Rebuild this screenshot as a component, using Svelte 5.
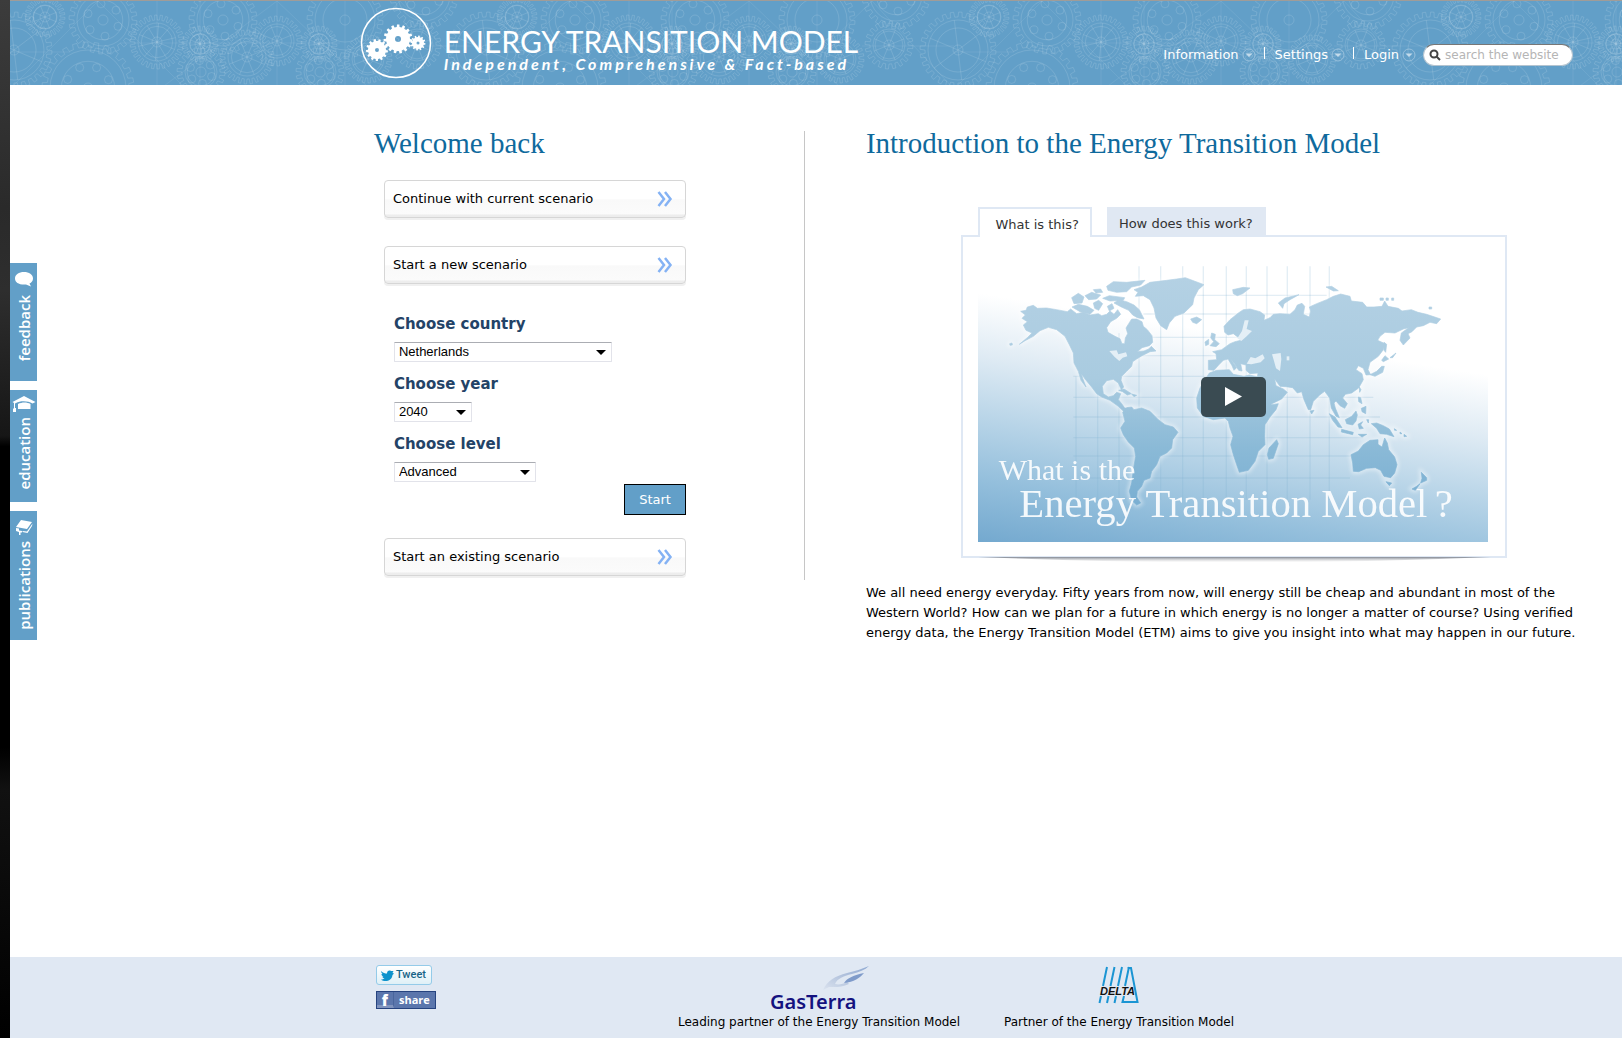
<script>
  const TAU = Math.PI * 2;

  // Outline of a cog: square teeth of the given depth round a rim.
  function cog(cx, cy, r, teeth, depth) {
    const step = TAU / teeth;
    const at = (radius, angle) =>
      `${(cx + radius * Math.cos(angle)).toFixed(2)} ${(cy + radius * Math.sin(angle)).toFixed(2)}`;
    let d = '';
    for (let i = 0; i < teeth; i++) {
      const a = i * step;
      d += `${i ? 'L' : 'M'}${at(r - depth, a)}L${at(r, a + step * 0.08)}`;
      d += `L${at(r, a + step * 0.48)}L${at(r - depth, a + step * 0.56)}`;
    }
    return d + 'Z';
  }

  function around(cx, cy, distance, count) {
    return Array.from({ length: count }, (_, i) => ({
      x: cx + distance * Math.cos((i * TAU) / count + 0.4),
      y: cy + distance * Math.sin((i * TAU) / count + 0.4),
    }));
  }

  const cogs = [
    { x: 93, y: 19, r: 34, teeth: 24, holes: 6, spokes: 0 },
    { x: 213, y: 19, r: 34, teeth: 24, holes: 6, spokes: 0 },
    { x: 147, y: 41, r: 27, teeth: 30, holes: 0, spokes: 10 },
    { x: 78, y: 87, r: 46, teeth: 26, holes: 8, spokes: 0 },
    { x: 4, y: 49, r: 38, teeth: 28, holes: 0, spokes: 6 },
    { x: 476, y: 49, r: 38, teeth: 28, holes: 0, spokes: 6 },
    { x: 35, y: 16, r: 20, teeth: 26, holes: 0, spokes: 8 },
    { x: 237, y: 56, r: 27, teeth: 28, holes: 0, spokes: 8 },
    { x: 191, y: 71, r: 24, teeth: 20, holes: 6, spokes: 0 },
    { x: 190, y: 43, r: 18, teeth: 22, holes: 0, spokes: 12 },
    { x: 267, y: 40, r: 25, teeth: 26, holes: 0, spokes: 8 },
    { x: 335, y: 19, r: 38, teeth: 26, holes: 0, spokes: 0 },
    { x: 309, y: 43, r: 18, teeth: 22, holes: 0, spokes: 12 },
    { x: 310, y: 71, r: 24, teeth: 20, holes: 6, spokes: 0 },
    { x: 358, y: 58, r: 24, teeth: 26, holes: 0, spokes: 8 },
    { x: 414, y: -6, r: 34, teeth: 24, holes: 6, spokes: 0 },
    { x: 407, y: 44, r: 24, teeth: 20, holes: 0, spokes: 8 },
  ];

  const menu = ['Information', 'Settings', 'Login'];
  const countries = ['Netherlands', 'Germany', 'United Kingdom'];
  const years = ['2020', '2030', '2040', '2050'];
  const levels = ['Simple', 'Medium', 'Advanced'];

  let country = $state('Netherlands');
  let year = $state('2040');
  let level = $state('Advanced');
  let query = $state('');

  const meridians = [378, 443, 507, 567, 632, 698, 760, 829, 889, 951, 1012, 1080, 1138];
  const parallels = [
    [317, 740, 1130], [373, 580, 1150], [443, 580, 1150], [498, 560, 1150], [560, 370, 1200],
    [623, 370, 1270], [682, 370, 1290], [744, 370, 1240], [799, 370, 1220], [865, 400, 1200],
  ];

  const land = [
    // North and Central America
    'M212 365L228 362 232 352 250 347 262 356 290 355 320 360 352 366 362 358 380 372 400 368 420 376 445 372 455 378 470 374 480 364 492 374 503 360 512 374 500 386 482 396 470 414 474 428 495 440 510 447 516 462 524 462 526 445 533 432 528 415 536 402 545 388 560 388 576 396 580 410 592 420 606 438 608 458 598 468 576 474 562 486 582 484 596 478 604 470 618 484 600 486 576 498 560 508 548 516 545 530 530 545 515 560 513 572 521 592 514 600 505 580 490 569 470 573 457 590 460 612 475 622 490 618 500 608 512 612 505 630 515 642 524 655 545 656 524 668 505 650 480 632 455 622 440 612 425 592 405 568 394 552 398 566 408 592 393 572 385 545 372 520 370 490 358 465 345 440 320 420 295 413 270 423 250 440 225 453 208 464 232 444 246 430 228 422 220 406 232 396 216 386 226 376Z',
    // Aleutian islands
    'M179 462L186 460 187 466 180 467Z',
    // Arctic islands
    'M365 324L385 311 402 322 396 340 372 342ZM366 352L385 344 412 350 432 362 420 374 390 366ZM405 318L425 308 452 316 440 328 416 330ZM430 300L452 298 458 308 438 310ZM430 340L446 332 458 342 446 362 434 356ZM458 326L478 318 524 324 520 332 480 334ZM470 290L490 276 530 278 585 272 572 286 545 292 530 306 500 308 474 302ZM492 340L506 330 530 336 552 346 568 360 582 388 562 384 548 376 536 362 514 352ZM472 350L486 342 492 356 478 364Z',
    // Greenland and Iceland
    'M552 300L575 292 600 278 650 272 680 268 706 264 735 275 762 285 745 300 732 325 728 345 702 370 675 380 658 400 650 420 632 408 618 385 612 355 600 330 580 318 556 320 564 308ZM722 388L740 382 755 390 740 402 728 398Z',
    // Caribbean
    'M506 602L522 598 544 612 532 616 518 606ZM545 613L560 617 552 621Z',
    // South America
    'M518 668L530 654 545 652 552 660 575 655 600 665 625 690 645 705 670 712 684 728 668 750 665 775 650 790 630 800 620 825 605 845 600 865 582 872 575 890 562 905 560 922 572 940 560 946 545 932 538 905 545 880 550 840 557 800 553 775 535 757 520 735 512 715 525 695Z',
    // Britain and Ireland
    'M785 430L796 434 794 450 808 462 798 471 780 468 791 456 782 444ZM765 457L776 449 776 464 767 468Z',
    // Africa and Madagascar
    'M778 550L800 542 838 540 850 554 882 560 898 556 925 562 930 582 942 605 952 628 965 645 985 642 978 660 960 682 945 705 944 740 945 765 925 785 915 815 895 842 868 848 860 825 850 795 842 765 849 740 840 715 835 695 825 685 790 690 760 680 742 655 740 625 750 595 765 570ZM980 750L985 762 970 806 956 809 952 795 957 775Z',
    // Europe and Asia
    'M775 512L800 510 798 492 788 486 815 480 840 462 855 456 872 452 878 442 866 444 850 432 834 436 824 428 822 410 840 390 865 370 880 360 900 358 930 366 944 376 942 392 960 384 970 374 990 372 1020 374 1035 360 1042 346 1056 341 1064 350 1060 374 1078 382 1082 364 1078 352 1100 342 1130 330 1150 320 1172 313 1200 320 1204 334 1238 338 1250 352 1272 352 1296 350 1304 334 1314 350 1345 356 1356 364 1384 360 1404 368 1430 374 1472 388 1460 402 1440 398 1420 408 1400 412 1386 426 1374 432 1380 445 1360 466 1350 452 1354 430 1376 414 1360 418 1335 430 1305 428 1290 440 1283 452 1305 462 1300 480 1285 500 1260 518 1254 540 1262 555 1248 556 1240 536 1225 528 1218 540 1236 552 1240 570 1226 595 1205 610 1186 614 1178 625 1192 642 1184 656 1170 648 1158 634 1152 640 1156 655 1168 684 1158 680 1144 655 1139 625 1124 605 1110 615 1090 635 1082 660 1075 660 1062 630 1055 606 1042 610 1028 594 1008 591 990 590 974 568 978 588 1000 598 1012 608 995 628 958 646 946 620 930 590 922 562 924 550 900 552 888 542 888 526 872 522 876 544 866 542 852 520 842 508 860 534 852 542 846 528 834 508 820 512 806 526 792 542 775 540Z',
    // Islands off Asia
    'M985 340L1005 325 1047 315 1020 330 1002 342 998 356ZM848 300L880 293 900 295 878 312 862 318 850 312ZM1128 292L1145 290 1165 303 1150 304ZM1260 555L1280 545 1295 530 1303 530 1298 548 1275 560ZM1295 512L1305 498 1316 508 1300 516ZM1302 458L1310 464 1307 488 1302 482ZM1320 504L1338 490 1328 504ZM1228 592L1233 600 1229 608ZM1225 622L1232 624 1236 642 1226 636ZM1234 656L1248 650 1247 672 1236 666ZM1080 664L1092 662 1085 673ZM1290 325h10v7h-10ZM1308 325h7v7h-7ZM1325 325h6v7h-6ZM1437 352h8v6h-8Z',
    // Indonesia and New Guinea
    'M1138 672L1155 682 1176 714 1164 712 1148 692ZM1175 719L1210 728 1208 735 1174 727ZM1186 690L1205 680 1218 664 1222 676 1218 694 1208 706 1190 702ZM1224 704L1238 696 1232 706 1240 716 1228 718ZM1225 734L1250 734 1236 742ZM1250 690L1256 690 1255 700ZM1264 702L1280 700 1300 708 1318 718 1332 741 1310 734 1290 732 1280 716ZM1333 717L1340 722 1334 722ZM1350 727L1356 732 1350 732ZM1362 734L1370 740 1362 741Z',
    // Australia and New Zealand
    'M1203 795L1225 784 1240 765 1260 752 1284 750 1284 764 1296 772 1304 745 1312 760 1316 780 1334 802 1341 825 1334 850 1322 864 1302 860 1292 842 1276 834 1250 836 1226 846 1210 845 1208 820ZM1308 876L1325 880 1318 888ZM1414 848L1430 864 1430 872 1412 880 1416 866ZM1410 882L1396 902 1386 898 1400 890Z',
  ];

  // Inland waters, drawn over the land
  const water = [
    'M478 484L500 482 505 494 528 488 532 500 518 504 508 514 494 502Z',
    'M890 522L902 502 916 506 938 494 944 506 932 518 904 524Z',
    'M966 494L992 490 994 508 990 544 978 536 972 514Z',
    'M862 446L876 424 884 392 896 392 890 418 906 424 890 440 874 454Z',
    'M1010 500h8v12h-8Z',
  ];
</script>

{#snippet chevrons()}
  <svg class="chevrons" viewBox="0 0 16 16" aria-hidden="true">
    <path d="M1.5 1L7 8L1.5 15M8 1L13.500 8L8 15" />
  </svg>
{/snippet}

{#snippet dropdown(id, label, options, size, get, set)}
  <label for={id}>{label}</label>
  <span class="select {size}">
    <select {id} bind:value={get, set}>
      {#each options as option}
        <option>{option}</option>
      {/each}
    </select>
    <svg viewBox="0 0 10 5" aria-hidden="true"><path d="M0 0H10L5 5Z" /></svg>
  </span>
{/snippet}

<div class="window">
  <div class="backdrop"></div>
  <div class="page">
    <header>
      <svg class="texture" aria-hidden="true">
        <defs>
          <pattern id="cogs" width="472" height="90" patternUnits="userSpaceOnUse">
            <path class="guide" d="M0 88L88 0L176 88M147 0V88M110 42H330M150 88L267 0L360 88M190 0V88M267 0V88M300 88L390 0L472 88M0 51H60M335 0V88M380 45H472" />
            {#each cogs as c}
              <path d={cog(c.x, c.y, c.r, c.teeth, 5)} />
              <circle cx={c.x} cy={c.y} r={c.r - 8} />
              <circle cx={c.x} cy={c.y} r={c.r * 0.58} />
              <circle cx={c.x} cy={c.y} r="5" />
              {#each around(c.x, c.y, c.r * 0.48, c.holes) as h}
                <circle cx={h.x} cy={h.y} r="4" />
              {/each}
              {#each around(c.x, c.y, c.r - 8, c.spokes) as s}
                <line x1={c.x} y1={c.y} x2={s.x} y2={s.y} />
              {/each}
            {/each}
          </pattern>
        </defs>
        <rect width="100%" height="100%" fill="url(#cogs)" />
      </svg>
      <div class="bar">
        <a class="brand" href="/">
          <svg class="emblem" viewBox="0 0 72 72" aria-hidden="true">
            <circle cx="36" cy="36" r="34.500" />
            <path d={cog(38, 32, 14.5, 15, 2.5) + 'M41 32a3 3 0 1 0-6 0a3 3 0 1 0 6 0Z'} />
            <path d={cog(17, 43, 11, 13, 2) + 'M19 43a2 2 0 1 0-4 0a2 2 0 1 0 4 0Z'} />
            <path d={cog(58, 36, 7.5, 12, 1.5) + 'M59.500 36a1.500 1.500 0 1 0-3 0a1.500 1.500 0 1 0 3 0Z'} />
          </svg>
          <span class="wordmark">
            <span class="name">ENERGY TRANSITION MODEL</span>
            <span class="tagline">Independent, Comprehensive &amp; Fact-based</span>
          </span>
        </a>
        <nav>
          {#each menu as item}
            <button type="button">
              {item}
              <svg viewBox="0 0 14 14" aria-hidden="true">
                <circle cx="7" cy="7" r="6" /><path d="M3.500 5.500H10.500L7 9Z" />
              </svg>
            </button>
          {/each}
        </nav>
        <form class="search" role="search">
          <svg viewBox="0 0 12 12" aria-hidden="true"><circle cx="5" cy="5" r="3.500" /><path d="M7.500 7.500L11 11" /></svg>
          <input type="text" aria-label="Search" placeholder="search the website" bind:value={query} />
        </form>
      </div>
    </header>

    <div class="body">
      <aside>
        <a class="feedback" href="#feedback">
          <svg viewBox="0 0 20 16" aria-hidden="true"><path d="M10 1C15 1 19 3.500 19 7.500C19 10 17.500 11.500 15.500 12.500L17 15.500L12 13.500C5 14 1 11.500 1 7.500C1 3.500 5 1 10 1Z" /></svg>
          <span>feedback</span>
        </a>
        <a class="education" href="#education">
          <svg viewBox="0 0 24 18" aria-hidden="true"><path d="M12 1L23.500 7L20.500 8.500C16 5.500 8 5.500 4 8L3 8.500V13H4V17H1V14L2 13V8L0.500 7ZM6 9C10 7 15 7 18.500 9V14H6Z" /></svg>
          <span>education</span>
        </a>
        <a class="publications" href="#publications">
          <svg viewBox="0 0 18 16" aria-hidden="true"><path d="M6 1L17 3L12 10L1 8ZM17.500 4.500L17 7L12.500 14L7.500 13L7.500 12L12 12.500ZM1 9L4 9.500V11.500L7 12V13.500H5.500V16H4V13L1 12Z" /></svg>
          <span>publications</span>
        </a>
      </aside>

      <main>
        <section class="start">
          <h1>Welcome back</h1>
          <div class="choices">
            <button type="button" class="wide">Continue with current scenario {@render chevrons()}</button>
            <button type="button" class="wide">Start a new scenario {@render chevrons()}</button>
            <form class="scenario">
              {@render dropdown('country', 'Choose country', countries, 'long', () => country, (v) => (country = v))}
              {@render dropdown('year', 'Choose year', years, 'short', () => year, (v) => (year = v))}
              {@render dropdown('level', 'Choose level', levels, 'medium', () => level, (v) => (level = v))}
              <button type="button" class="go">Start</button>
            </form>
            <button type="button" class="wide">Start an existing scenario {@render chevrons()}</button>
          </div>
        </section>

        <section class="intro">
          <h2>Introduction to the Energy Transition Model</h2>
          <div class="player">
            <div class="tabs" role="tablist">
              <button type="button" role="tab" aria-selected="true">What is this?</button>
              <button type="button" role="tab" aria-selected="false">How does this work?</button>
            </div>
            <div class="panel" role="tabpanel">
              <div class="video">
                <svg class="poster" viewBox="84 196 1530 861" role="img" aria-label="World map">
                  <defs>
                    <linearGradient id="sky" gradientUnits="userSpaceOnUse" x1="84" y1="310" x2="-33" y2="1037">
                      <stop offset="0" stop-color="#fff" />
                      <stop offset="0.250" stop-color="#dfebf4" />
                      <stop offset="0.500" stop-color="#b9d5e8" />
                      <stop offset="0.750" stop-color="#94bfdc" />
                      <stop offset="1" stop-color="#74a9cf" />
                    </linearGradient>
                    <linearGradient id="ground" gradientUnits="userSpaceOnUse" x1="0" y1="260" x2="0" y2="940">
                      <stop offset="0" stop-color="#b4d1e4" />
                      <stop offset="0.450" stop-color="#a9cbe0" />
                      <stop offset="0.750" stop-color="#8bbad7" />
                      <stop offset="1" stop-color="#7aafd2" />
                    </linearGradient>
                    <filter id="glow"><feGaussianBlur stdDeviation="7" /></filter>
                    <filter id="soft"><feGaussianBlur stdDeviation="1" /></filter>
                  </defs>
                  <rect x="84" y="196" width="1530" height="861" fill="url(#sky)" />
                  <g class="grid">
                    {#each meridians as x}<path d="M{x} {x < 560 ? 560 - (x - 378) : 230}V930" />{/each}
                    {#each parallels as [y, from, to]}<path d="M{from} {y}H{to}" />{/each}
                  </g>
                  <g class="halo" filter="url(#glow)">
                    {#each land as d}<path {d} />{/each}
                  </g>
                  <g filter="url(#soft)">
                    {#each land as d}<path {d} class="land" />{/each}
                    {#each water as d}<path {d} class="water" />{/each}
                  </g>
                  <text x="146" y="872" font-size="90">What is the</text>
                  <text x="208" y="983" font-size="122">Energy Transition Model</text>
                  <text x="1454" y="983" font-size="122">?</text>
                </svg>
                <button type="button" class="play" aria-label="Play">
                  <svg viewBox="0 0 17 19" aria-hidden="true"><path d="M0 0L17 9.500L0 19Z" /></svg>
                </button>
              </div>
            </div>
            <svg class="shade" viewBox="0 0 512 6" preserveAspectRatio="none" aria-hidden="true">
              <defs>
                <linearGradient id="fade" x1="0" y1="0" x2="0" y2="1">
                  <stop offset="0" stop-color="#858a94" />
                  <stop offset="1" stop-color="#ddd" stop-opacity="0" />
                </linearGradient>
              </defs>
              <path d="M0 0H512Q256 11 0 0Z" fill="url(#fade)" />
            </svg>
          </div>
          <p>We all need energy everyday. Fifty years from now, will energy still be cheap and abundant in most of the Western World? How can we plan for a future in which energy is no longer a matter of course? Using verified energy data, the Energy Transition Model (ETM) aims to give you insight into what may happen in our future.</p>
        </section>
      </main>
    </div>

    <footer>
      <div class="social">
        <a class="tweet" href="#tweet">
          <svg viewBox="0 0 13 11" aria-hidden="true"><path d="M0 1C2 3 4 3.500 6 3.500C6 1 8 0 10 1L12.500 1L11.500 3L13 3.500L11.500 5C11 9 8 11 4.500 11C3 11 1 10.500 0 9.500C1.500 9.500 2.500 9 3.500 8.500C2 8 1.500 7.500 1.500 6.500H2.500C1 6 0.500 5 0.500 4H1.500C0.500 3 0 2 0 1Z" /></svg>
          Tweet
        </a>
        <a class="share" href="#share"><b>f</b><span>share</span></a>
      </div>
      <a class="partner" href="#gasterra">
        <svg class="gasterra" viewBox="0 0 104 47" role="img" aria-label="GasTerra">
          <defs>
            <linearGradient id="plume" x1="0" y1="1" x2="1" y2="0">
              <stop offset="0" stop-color="#dbe3ef" />
              <stop offset="0.500" stop-color="#b3c3dd" />
              <stop offset="1" stop-color="#8fa9d2" />
            </linearGradient>
          </defs>
          <path fill="url(#plume)" d="M56 25C60 16 68 11 80 8C88 6 95 4 102 1C98 5 92 7 85 9C76 11 70 14 68 19C72 20 76 19 80 17L82 19C74 23 66 22 62 22Z" />
          <path fill="#7f9bca" d="M77 18C80 13 87 10 97 8C93 13 87 17 77 18Z" />
          <text x="3" y="44">GasTerra</text>
        </svg>
        Leading partner of the Energy Transition Model
      </a>
      <a class="partner" href="#delta">
        <svg class="delta" viewBox="0 9 42 47" role="img" aria-label="Delta">
          <path d="M9 11L5 30M16.500 11L12.500 30M24 11L20 30M31 11L27 30M3 40L1.500 47M10.500 40L9 47M18 40L16.500 47M29.500 12H33L39.500 46H24.500L26 40" />
          <text x="2" y="39">DELTA</text>
        </svg>
        Partner of the Energy Transition Model
      </a>
    </footer>
  </div>
</div>

<style>
  :global(body) {
    margin: 0;
    background: #fff;
    color: #000;
    font: 13px/20px Verdana, 'DejaVu Sans', sans-serif;
  }

  * {
    box-sizing: border-box;
  }

  a {
    color: inherit;
    text-decoration: none;
  }

  button {
    font: inherit;
    color: inherit;
    cursor: pointer;
  }

  .window {
    display: flex;
    min-height: 100vh;
  }

  .backdrop {
    flex: 0 0 10px;
    background: linear-gradient(#3c3c3c, #2a2a2a 20%, #2e2e2e 28%, #161616 42%, #000 43%, #000 72%, #111 76%, #000);
  }

  .page {
    flex: 1;
    min-width: 0;
    display: flex;
    flex-direction: column;
  }

  header {
    display: grid;
    border-top: 1px solid #a09c98;
    background: #629fc8;
  }

  .texture,
  .bar {
    grid-area: 1 / 1;
  }

  .texture {
    width: 100%;
    height: 0;
    min-height: 100%;
  }

  .texture path,
  .texture circle,
  .texture line {
    fill: none;
    stroke: #fff;
    stroke-opacity: 0.12;
  }

  .texture .guide {
    stroke-opacity: 0.07;
  }

  .bar {
    z-index: 1;
    display: flex;
    align-items: center;
    height: 84px;
    padding: 0 49px 0 21.7%;
    color: #fff;
  }

  .brand {
    display: flex;
    align-items: center;
    gap: 12px;
    margin-right: auto;
    white-space: nowrap;
  }

  .emblem {
    width: 72px;
    height: 72px;
  }

  .emblem circle {
    fill: none;
    stroke: #fff;
    stroke-width: 1.5;
  }

  .emblem path {
    fill: #fff;
    fill-rule: evenodd;
  }

  .wordmark {
    display: flex;
    flex-direction: column;
    padding-top: 11px;
    font-family: Lato, sans-serif;
  }

  .name {
    font-size: 30px;
    line-height: 30px;
  }

  .tagline {
    font-size: 16px;
    line-height: 16px;
    font-style: italic;
    font-weight: 700;
    letter-spacing: 3px;
  }

  nav {
    display: flex;
    padding-top: 23px;
  }

  nav button {
    display: flex;
    align-items: center;
    gap: 3px;
    padding: 0;
    border: 0;
    background: none;
  }

  nav button + button::before {
    content: '';
    width: 1px;
    height: 12px;
    margin: 0 7px 3px 8px;
    background: #fff;
  }

  nav svg {
    width: 14px;
    height: 14px;
  }

  nav circle {
    fill: none;
    stroke: #98c0dc;
  }

  nav path {
    fill: #c3dbeb;
  }

  .search {
    display: flex;
    align-items: center;
    gap: 4px;
    width: 150px;
    height: 22px;
    margin: 23px 0 0 7px;
    padding-left: 5px;
    border: 1px solid #b4c4d0;
    border-top-color: #777;
    border-radius: 11px;
    background: #fff;
  }

  .search svg {
    flex: none;
    width: 12px;
    height: 12px;
    fill: none;
    stroke: #444;
    stroke-width: 2;
  }

  .search input {
    min-width: 0;
    flex: 1;
    padding: 0;
    border: 0;
    outline: 0;
    background: none;
    font: 12px/18px Verdana, 'DejaVu Sans', sans-serif;
  }

  .search input::placeholder {
    color: #b5b5b5;
  }

  .body {
    flex: 1;
    display: flex;
  }

  aside {
    flex: 0 0 27px;
    display: flex;
    flex-direction: column;
    gap: 9px;
    padding-top: 178px;
  }

  aside a {
    display: flex;
    flex-direction: column;
    align-items: center;
    gap: 8px;
    padding-top: 8px;
    background: #629fc8;
    color: #fff;
    font: 600 15px/20px 'Open Sans', sans-serif;
  }

  aside a span {
    writing-mode: vertical-rl;
    transform: rotate(180deg);
  }

  aside svg {
    width: 20px;
    height: 16px;
    fill: #fff;
  }

  .feedback {
    height: 118px;
  }

  .education {
    height: 112px;
    gap: 4px;
    padding-top: 5px;
  }

  .education svg {
    width: 24px;
    height: 18px;
  }

  .publications {
    height: 129px;
    gap: 6px;
  }

  main {
    flex: 1;
    min-width: 0;
    display: flex;
    align-items: flex-start;
    padding: 46px 19px 40px 20.9%;
  }

  h1,
  h2 {
    margin: 0;
    color: #0f6a9d;
    font: 400 29px/24px Georgia, 'Liberation Serif', serif;
  }

  .start {
    flex: 0 0 431px;
    padding-bottom: 4px;
    border-right: 1px solid #c6c6c6;
  }

  .choices {
    display: flex;
    flex-direction: column;
    gap: 28px;
    width: 302px;
    margin: 25px 0 0 10px;
  }

  .wide {
    display: flex;
    align-items: center;
    justify-content: space-between;
    height: 38px;
    padding: 0 12px 1px 8px;
    border: 1px solid #d6d6d6;
    border-radius: 4px;
    background: linear-gradient(#fff 50%, #f9f9f9 52%, #fbfbfb 92%, #ededed 94%);
    box-shadow: 0 2px 0 #f0f0f0;
  }

  .chevrons {
    width: 16px;
    height: 16px;
    fill: none;
    stroke: #84b2f4;
    stroke-width: 2.5;
  }

  .scenario {
    display: flex;
    flex-direction: column;
    align-items: flex-start;
    margin: 2px 0 -5px;
    padding-left: 10px;
  }

  .scenario label {
    margin-bottom: 8px;
    color: #234367;
    font-size: 15px;
    font-weight: 700;
  }

  .select {
    display: grid;
    align-items: center;
    margin-bottom: 12px;
  }

  .select.medium {
    margin-bottom: 2px;
  }

  .long {
    width: 218px;
  }

  .short {
    width: 78px;
  }

  .medium {
    width: 142px;
  }

  .select select,
  .select svg {
    grid-area: 1 / 1;
  }

  .select select {
    appearance: none;
    width: 100%;
    height: 20px;
    padding: 0 20px 0 4px;
    border: 1px solid #e2e3ea;
    border-top-color: #abadb3;
    border-radius: 1px;
    background: #fff;
    color: #000;
    font: 13px/18px Arial, 'Liberation Sans', sans-serif;
  }

  .select svg {
    justify-self: end;
    width: 10px;
    height: 5px;
    margin-right: 6px;
    pointer-events: none;
  }

  .go {
    align-self: flex-end;
    height: 31px;
    padding: 0 14px;
    border: 1px solid #000;
    background: #629fc8;
    color: #fff;
  }

  .intro {
    flex: 1;
    min-width: 0;
    padding-left: 61px;
  }

  h2 {
    white-space: nowrap;
  }

  .player {
    max-width: 546px;
    margin: 52px auto 0;
  }

  .tabs {
    display: flex;
    gap: 15px;
    padding-left: 17px;
    color: #333;
  }

  .tabs button {
    height: 28px;
    padding: 6px 13px 0 12px;
    border: 0;
    background: #e0e8f3;
  }

  .tabs button[aria-selected='true'] {
    z-index: 1;
    height: 30px;
    margin-bottom: -2px;
    padding: 3px 11px 0 15px;
    border: solid #dfe8f4;
    border-width: 2px 2px 0;
    background: #fff;
  }

  .panel {
    padding: 18px 17px 14px 15px;
    border: 2px solid #dfe8f4;
  }

  .video {
    display: grid;
    place-items: center;
  }

  .poster,
  .play {
    grid-area: 1 / 1;
  }

  .poster {
    display: block;
    width: 100%;
  }

  .poster text {
    fill: #fff;
    fill-opacity: 0.9;
    font-family: Georgia, 'Liberation Serif', serif;
  }

  .grid path {
    fill: none;
    stroke: #7fb0d2;
    stroke-opacity: 0.22;
    stroke-width: 4;
  }

  .halo path {
    fill: #fff;
    stroke: #fff;
    stroke-width: 12;
    opacity: 0.5;
  }

  .land {
    fill: url(#ground);
    stroke: url(#ground);
    stroke-width: 2;
    stroke-linejoin: round;
  }

  .water {
    fill: #e4eff6;
  }

  .play {
    z-index: 1;
    display: grid;
    place-items: center;
    width: 65px;
    height: 40px;
    margin-bottom: 4px;
    padding: 0;
    border: 0;
    border-radius: 5px;
    background: #3a4b52;
  }

  .play svg {
    width: 17px;
    height: 19px;
    fill: #fff;
  }

  .shade {
    display: block;
    width: 94%;
    height: 6px;
    margin: -1px auto 0;
  }

  p {
    margin: 20px 0 0;
  }

  footer {
    display: flex;
    align-items: flex-start;
    height: 81px;
    padding: 8px 20px 0 22.7%;
    background: #e0e8f3;
    font-size: 12px;
  }

  .social {
    display: flex;
    flex-direction: column;
    align-items: flex-start;
    gap: 6px;
    width: 302px;
  }

  .tweet {
    display: flex;
    align-items: center;
    gap: 2px;
    height: 20px;
    padding: 0 5px 0 4px;
    border: 1px solid #94cbe9;
    border-radius: 3px;
    background: linear-gradient(#fff, #dff0f7);
    color: #186487;
    font: 500 11px/18px Roboto, sans-serif;
  }

  .tweet svg {
    width: 13px;
    height: 11px;
    fill: #0f93cc;
  }

  .share {
    display: flex;
    width: 60px;
    height: 18px;
    border: 1px solid #26437f;
    background: #5b76ac;
    color: #fff;
    font: 700 11px/16px 'Open Sans', sans-serif;
  }

  .share b {
    width: 17px;
    border-right: 1px solid #49659c;
    border-bottom: 3px solid #8094be;
    font-size: 15px;
    line-height: 16px;
    text-align: center;
  }

  .share span {
    flex: 1;
    text-align: center;
  }

  .partner {
    display: flex;
    flex-direction: column;
    align-items: center;
    margin-right: 44px;
    white-space: nowrap;
  }

  .partner svg {
    display: block;
    height: 47px;
    overflow: visible;
  }

  .gasterra {
    width: 104px;
  }

  .gasterra text {
    fill: #14127f;
    font: 600 20px 'Noto Sans', sans-serif;
  }

  .delta {
    width: 42px;
  }

  .delta path {
    fill: none;
    stroke: #1b95d3;
    stroke-width: 2;
  }

  .delta text {
    fill: #111;
    font: italic 700 11px 'Liberation Sans', sans-serif;
  }
</style>
